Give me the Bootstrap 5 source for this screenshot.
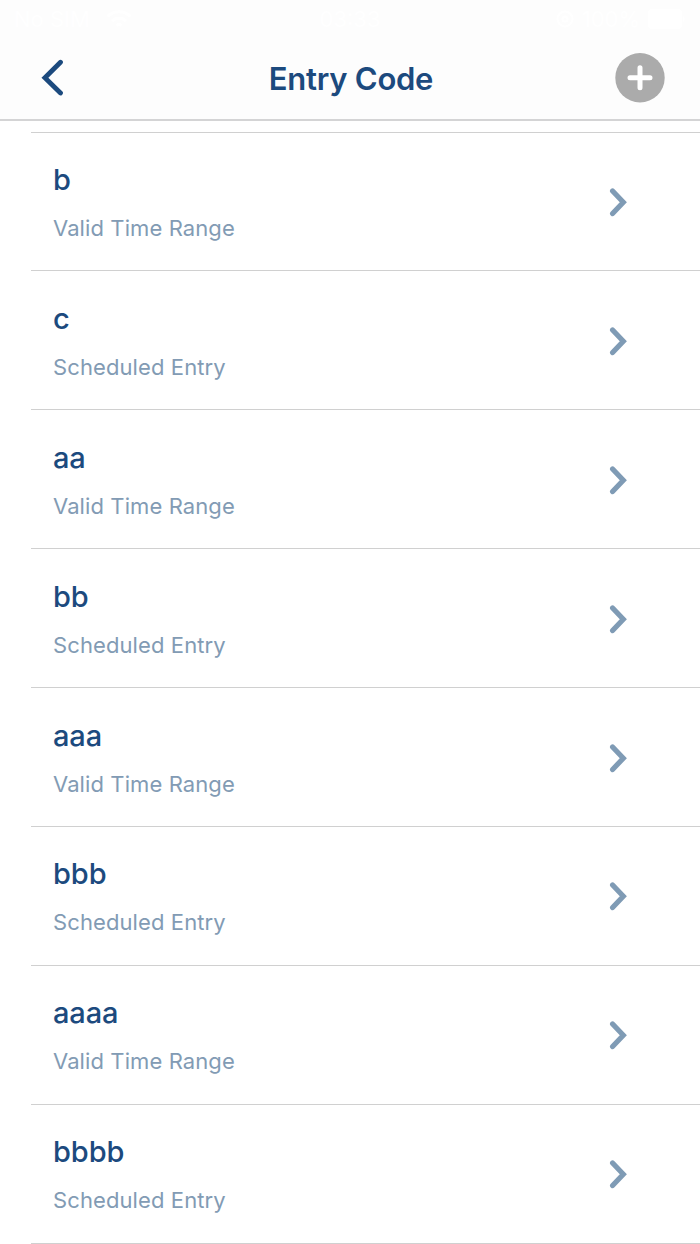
<!DOCTYPE html>
<html lang="en">
<head>
<meta charset="utf-8">
<meta name="viewport" content="width=device-width, initial-scale=1">
<title>Entry Code</title>
<link href="https://cdn.jsdelivr.net/npm/bootstrap@5.3.0/dist/css/bootstrap.min.css" rel="stylesheet">
<style>
body{font-family:Inter,"Liberation Sans",sans-serif;background:#fff;overflow:hidden;color:#1c4a7e}
.topbar{height:121px;background:#fdfdfd;border-bottom:2px solid #d4d4d5}
.status{height:36px;padding:2px 14px 0;font-size:22px;line-height:34px;color:#fff}
.status>*{flex:1 1 0}
.titlebar{height:83px;padding:0 35px 0 40px}
.titlebar h1{font-size:31px;font-weight:600;line-height:40px;letter-spacing:-.25px;padding:2px 3px 0 0}
.side{width:50px}
.entries{margin:10.6px 0 0 31px;border-top:1px solid #d0d0d0}
.entry{height:138.9px;padding:29.4px 72px 0 22px;border-bottom:1px solid #d0d0d0}
.code{font-size:29px;font-weight:550;line-height:36px;letter-spacing:-.1px}
.kind{font-size:22px;line-height:28px;margin-top:16px;color:#829bb4;letter-spacing:.1px}
.go{margin-top:25px}
</style>
</head>
<body>
<header class="topbar">
<div class="status d-flex align-items-center">
<div class="d-flex align-items-center gap-3"><span>No SIM</span><svg width="26" height="19" viewBox="0 0 26 19" fill="none" stroke="#fff" stroke-width="3"><path d="M1.5 6.5a16.500 16.500 0 0 1 23 0M6 11a10 10 0 0 1 14 0M10.500 15.500a4 4 0 0 1 5 0"/></svg></div>
<div class="text-center">03:33</div>
<div class="d-flex align-items-center justify-content-end gap-2"><svg width="18" height="18" viewBox="0 0 18 18" fill="none" stroke="#fff" stroke-width="2"><circle cx="9" cy="9" r="7.500"/><circle cx="9" cy="9" r="2.500"/></svg><span>100%</span><svg width="38" height="20" viewBox="0 0 38 20" fill="#fff"><rect width="34" height="20" rx="4"/><path d="M35 6.500q3 3.500 0 7z"/></svg></div>
</div>
<div class="titlebar d-flex justify-content-between align-items-center">
<a href="#" class="side" aria-label="Back"><svg class="d-block" width="26" height="38" viewBox="0 0 26 38" fill="none" stroke="#1c4a7e" stroke-width="4.8" stroke-linecap="round"><path d="M20.500 3.200 4.900 18.700 20.500 34"/></svg></a>
<h1 class="m-0">Entry Code</h1>
<a href="#" class="side" aria-label="Add"><svg class="d-block" width="50" height="50" viewBox="0 0 50 50"><circle cx="25" cy="24.700" r="24.700" fill="#ababab"/><path d="M25 14.700v20M15 24.700h20" stroke="#fff" stroke-width="5" stroke-linecap="round"/></svg></a>
</div>
</header>
<main class="entries" id="entries"></main>
<script src="https://cdn.jsdelivr.net/npm/bootstrap@5.3.0/dist/js/bootstrap.bundle.min.js"></script>
<script>
const kinds=['Valid Time Range','Scheduled Entry'];
document.getElementById('entries').innerHTML=['b','c','aa','bb','aaa','bbb','aaaa','bbbb'].map((c,i)=>`
<div class="entry d-flex justify-content-between align-items-start">
<div><div class="code">${c}</div><div class="kind">${kinds[i%2]}</div></div>
<svg class="go" width="20" height="30" viewBox="0 0 20 30" fill="none" stroke="#7f9bb5" stroke-width="5.2" stroke-linecap="round"><path d="M4.600 4 15.300 15.200 4.600 26.500"/></svg>
</div>`).join('');
</script>
</body>
</html>
